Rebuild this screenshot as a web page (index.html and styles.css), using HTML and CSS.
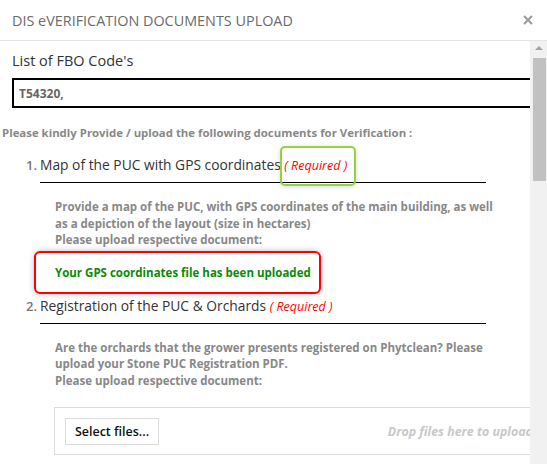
FILE: index.html
```html
<!DOCTYPE html>
<html>
<head>
<meta charset="utf-8">
<link rel="stylesheet" href="styles.css">
</head>
<body>
<div class="dialog">
  <div class="header">
    <span class="title">DIS eVERIFICATION DOCUMENTS UPLOAD</span>
    <svg class="close" width="10" height="10" viewBox="0 0 10 10"><path d="M1 1L9 9M9 1L1 9" stroke="#9a9a9a" stroke-width="2"/></svg>
  </div>
  <div class="main">
    <div class="content">
      <div class="fbo">
        <div class="label">List of FBO Code's</div>
        <div class="codes">T54320,</div>
      </div>
      <div class="intro">Please kindly Provide / upload the following documents for Verification :</div>
      <div class="item">
        <span class="num">1.</span>
        <div class="body">
          <div class="item-title">Map of the PUC with GPS coordinates <span class="req focused">( Required )</span></div>
          <p class="desc">Provide a map of the PUC, with GPS coordinates of the main building, as well<br>as a depiction of the layout (size in hectares)<br>Please upload respective document:</p>
          <div class="status">Your GPS coordinates file has been uploaded</div>
        </div>
      </div>
      <div class="item">
        <span class="num">2.</span>
        <div class="body">
          <div class="item-title">Registration of the PUC &amp; Orchards <span class="req">( Required )</span></div>
          <p class="desc">Are the orchards that the grower presents registered on Phytclean? Please<br>upload your Stone PUC Registration PDF.<br>Please upload respective document:</p>
          <div class="upload">
            <button class="select">Select files...</button>
            <span class="drop">Drop files here to upload</span>
          </div>
        </div>
      </div>
    </div>
    <div class="scrollbar">
      <div class="arrow"></div>
      <div class="thumb"></div>
    </div>
  </div>
</div>
</body>
</html>
```

FILE: styles.css
```css
html, body {
  margin: 0;
  padding: 0;
  background: #fff;
}
body {
  font-family: "Open Sans", "DejaVu Sans", sans-serif;
  width: 547px;
  height: 464px;
  overflow: hidden;
}
.dialog {
  width: 547px;
  height: 464px;
  display: flex;
  flex-direction: column;
}
.header {
  box-sizing: border-box;
  height: 41px;
  flex: none;
  padding: 0 14px 0 12px;
  display: flex;
  align-items: center;
  justify-content: space-between;
  border-bottom: 1px solid #e3e3e3;
}
.title {
  font-size: 14.4px;
  color: #6b6b6b;
}
.close {
  display: block;
}
.main {
  flex: 1;
  display: flex;
  min-height: 0;
}
.content {
  width: 530px;
  flex: none;
  overflow: hidden;
  padding-left: 2px;
  box-sizing: border-box;
}
.scrollbar {
  width: 17px;
  flex: none;
  background: #f1f1f1;
  display: flex;
  flex-direction: column;
  align-items: center;
}
.arrow {
  margin-top: 5px;
  width: 0;
  height: 0;
  border-left: 4px solid transparent;
  border-right: 4px solid transparent;
  border-bottom: 4px solid #a3a3a3;
}
.thumb {
  margin-top: 8px;
  width: 13px;
  margin-left: 2px;
  height: 123px;
  background: #c1c1c1;
}
.fbo {
  margin-left: 10px;
}
.label {
  margin-top: 10px;
  font-size: 14.5px;
  line-height: 20px;
  color: #333;
}
.codes {
  margin-top: 7px;
  box-sizing: border-box;
  height: 30px;
  width: 522px;
  border: 2px solid #000;
  padding-left: 5px;
  display: flex;
  align-items: center;
  font-size: 12px;
  font-weight: bold;
  color: #666;
}
.intro {
  margin-top: 17px;
  font-size: 11.4px;
  line-height: 16px;
  font-weight: bold;
  color: #888;
}
.item {
  display: grid;
  grid-template-columns: 38px 1fr;
}
.intro + .item {
  margin-top: 13px;
}
.item + .item {
  margin-top: 1px;
}
.num {
  text-align: right;
  padding-right: 3px;
  font-size: 13px;
  line-height: 22px;
  font-weight: 600;
  color: #777;
}
.item-title {
  width: 446px;
  font-size: 13.8px;
  line-height: 22px;
  color: #333;
  padding-bottom: 5px;
  border-bottom: 1px solid #000;
  white-space: nowrap;
}
.req {
  position: relative;
  font-size: 12.5px;
  font-style: italic;
  color: #f00;
}
.focused::after {
  content: "";
  position: absolute;
  left: -4px;
  right: -9px;
  top: -11px;
  bottom: -12px;
  border: 2px solid #95d23f;
  border-radius: 5px;
  box-shadow: 0 1px 5px rgba(0,0,0,0.15);
}
.desc {
  margin: 16px 0 0 15px;
  font-size: 11.5px;
  line-height: 16.5px;
  font-weight: bold;
  color: #888;
  white-space: nowrap;
}
.status {
  margin: 2px 0 0 -6px;
  box-sizing: border-box;
  width: 287px;
  height: 43px;
  border: 2px solid #f00;
  border-radius: 6px;
  box-shadow: 0 0 6px rgba(0,0,0,0.25);
  padding-left: 19px;
  display: flex;
  align-items: center;
  font-size: 11.5px;
  font-weight: bold;
  color: #0a8a0a;
  white-space: nowrap;
}
.upload {
  margin: 18px 0 0 14px;
  box-sizing: border-box;
  width: 496px;
  height: 48px;
  border: 1px solid #dcdcdc;
  padding: 0 16px 0 10px;
  display: flex;
  align-items: center;
  justify-content: space-between;
}
.select {
  font-family: inherit;
  height: 27px;
  width: 94px;
  background: #fff;
  border: 1px solid #dcdcdc;
  font-size: 12.5px;
  font-weight: 600;
  color: #111;
  padding: 0;
}
.drop {
  font-size: 12.4px;
  font-style: italic;
  font-weight: bold;
  color: #c8c8c8;
  white-space: nowrap;
}
```
